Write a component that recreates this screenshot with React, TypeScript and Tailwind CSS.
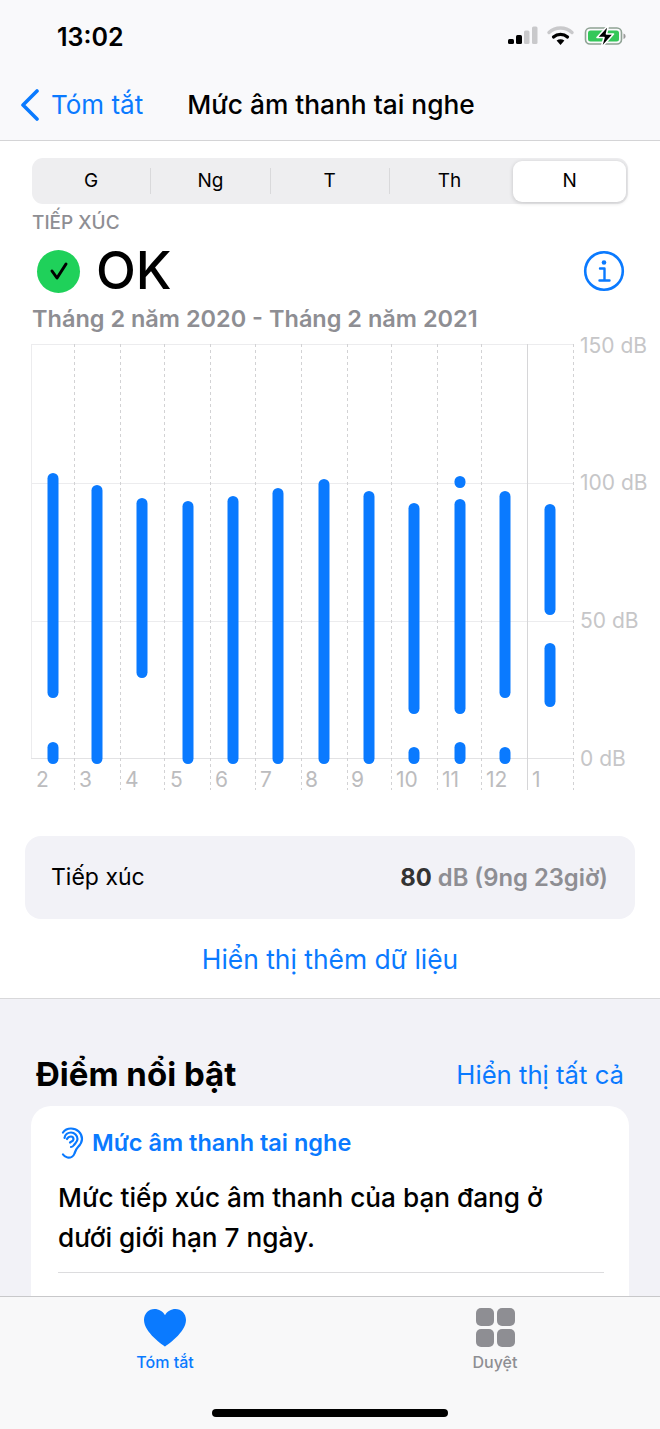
import React from 'react';

const font = { fontFamily: 'Inter, "Noto Sans", sans-serif' };

// chart data, y values are relative to the top of the chart box
const bars: [number, number, number][] = [
  [53, 133, 358], [53, 402, 424],
  [97, 145, 424],
  [142, 158, 338],
  [188, 161, 424],
  [233, 156, 424],
  [278, 148, 424],
  [324, 139, 424],
  [369, 151, 424],
  [414, 163, 374], [414, 407, 424],
  [460, 136, 148], [460, 159, 374], [460, 402, 424],
  [505, 151, 358], [505, 407, 424],
  [550, 164, 275], [550, 303, 367],
];

const gridRows = [4, 143, 281, 418];
const dashed = [74, 120, 164, 210, 255, 301, 347, 391, 437, 481, 573];

const monthLabels: [string, string][] = [
  ['2', 'left-[36px]'], ['3', 'left-[79px]'], ['4', 'left-[125px]'], ['5', 'left-[170px]'],
  ['6', 'left-[215px]'], ['7', 'left-[260px]'], ['8', 'left-[305px]'], ['9', 'left-[351px]'],
  ['10', 'left-[396px]'], ['11', 'left-[442px]'], ['12', 'left-[486px]'], ['1', 'left-[532px]'],
];

const dbLabels: [string, string][] = [
  ['150 dB', 'top-[-6px]'], ['100 dB', 'top-[131px]'], ['50 dB', 'top-[269px]'], ['0 dB', 'top-[407px]'],
];

const StatusIcons = () => (
  <svg width="120" height="22" viewBox="0 0 120 22" fill="none" className="overflow-visible">
    <rect x="0" y="13" width="6" height="5" rx="1.5" fill="#000" />
    <rect x="8" y="9" width="6" height="9" rx="1.5" fill="#000" />
    <rect x="16" y="4.5" width="5.5" height="13.5" rx="1.5" fill="#c9c9cb" />
    <rect x="24" y="0.5" width="5.5" height="17.5" rx="1.5" fill="#c9c9cb" />
    <path d="M41 6.5C47.5 0.5 57.5 0.5 64 6.5" stroke="#c9c9cb" strokeWidth="3.4" strokeLinecap="round" />
    <path d="M45.5 11C49.5 7.4 55.5 7.4 59.5 11" stroke="#000" strokeWidth="3.2" strokeLinecap="round" />
    <path d="M52.5 19L48.6 14.6C51 12.8 54 12.8 56.4 14.6Z" fill="#000" />
    <rect x="77.5" y="2" width="36" height="16" rx="4.5" stroke="#8fa294" strokeWidth="1.6" />
    <rect x="80" y="4.5" width="31" height="11" rx="2.5" fill="#34c759" />
    <path d="M115.5 7.5V13C117 12.5 117.5 11.5 117.5 10.2C117.5 9 117 8 115.5 7.5Z" fill="#9b9b9b" />
    <path d="M100.5 -1L89 11.5H96L93 22L105.5 8H98.5Z" fill="#000" stroke="#fff" strokeWidth="1.6" strokeLinejoin="round" />
  </svg>
);

const Chart = () => (
  <div className="relative h-[456px] w-full">
    <svg width="660" height="456" viewBox="0 0 660 456" fill="none" className="absolute left-0 top-0">
      {gridRows.map((y) => (
        <line key={y} x1="31" x2="573" y1={y + 0.5} y2={y + 0.5} stroke={y === 418 ? '#e2e2e4' : '#ececee'} />
      ))}
      <line x1="31.5" x2="31.5" y1="4" y2="418" stroke="#ececee" />
      <line x1="527.5" x2="527.5" y1="4" y2="450" stroke="#d6d6d8" />
      {dashed.map((x) => (
        <line key={x} x1={x + 0.5} x2={x + 0.5} y1="4" y2="450" stroke="#d2d2d4" strokeDasharray="3 3" />
      ))}
      {bars.map(([x, y1, y2], i) => (
        <rect key={i} x={x - 5.5} y={y1} width="11" height={y2 - y1} rx="5.5" fill="#0a7aff" />
      ))}
    </svg>
    {dbLabels.map(([text, pos]) => (
      <span key={text} className={`absolute left-[580px] ${pos} text-[21px] leading-[23px] text-[#c6c6c8] whitespace-nowrap`}>{text}</span>
    ))}
    {monthLabels.map(([text, pos]) => (
      <span key={text + pos} className={`absolute ${pos} top-[428px] text-[21px] leading-[23px] text-[#bcbcbe]`}>{text}</span>
    ))}
  </div>
);

const Segmented = () => (
  <div className="mx-[32px] mt-[17px] h-[46px] rounded-[11px] bg-[#eeeef0] flex items-center text-[19px] text-black">
    {['G', 'Ng', 'T', 'Th'].map((label, i) => (
      <div key={label} className={`w-[119.3px] h-[26px] flex items-center justify-center ${i < 3 ? 'border-r border-[#d9d9db]' : ''}`}>{label}</div>
    ))}
    <div className="flex-1 ml-[4px] mr-[2px] h-[41px] rounded-[9px] bg-white shadow-[0_1px_4px_rgba(0,0,0,0.18)] flex items-center justify-center">N</div>
  </div>
);

export default function App() {
  return (
    <div className="w-[660px] h-[1429px] bg-white overflow-hidden flex flex-col" style={font}>
      {/* header */}
      <div className="h-[141px] shrink-0 bg-[#f9f9fb] border-b border-[#d4d4d6] flex flex-col">
        <div className="flex justify-between items-center pl-[57px] pr-[32px] pt-[13px] h-[66px] pb-[6px]">
          <span className="text-[25px] font-semibold text-black leading-[30px]">13:02</span>
          <StatusIcons />
        </div>
        <div className="flex items-center pl-[20px] mt-[23px]">
          <svg width="20" height="32" viewBox="0 0 20 32" fill="none">
            <path d="M17 2L3 16L17 30" stroke="#0a7aff" strokeWidth="3.6" strokeLinecap="round" strokeLinejoin="round" />
          </svg>
          <span className="ml-[11px] text-[26px] text-[#0a7aff] leading-[32px]">Tóm tắt</span>
          <span className="ml-[44px] text-[26.3px] font-medium text-black leading-[32px]">Mức âm thanh tai nghe</span>
        </div>
      </div>

      <div className="flex-1 min-h-0 overflow-hidden flex flex-col">
        <div className="bg-white border-b border-[#d8d8da] shrink-0">
          <Segmented />
          <div className="pl-[32px] mt-[7px] text-[19px] font-medium leading-[24px] text-[#8e8e93]">TIẾP XÚC</div>
          <div className="flex items-center justify-between pl-[37px] pr-[35px] mt-[13px] h-[46px]">
            <div className="flex items-center gap-[16px]">
              <div className="w-[43px] h-[43px] rounded-full bg-[#1fd15a] flex items-center justify-center">
                <svg width="22" height="20" viewBox="0 0 22 20" fill="none">
                  <path d="M4 10L9 17L18 3" stroke="#000" strokeWidth="3" strokeLinecap="round" strokeLinejoin="round" />
                </svg>
              </div>
              <span className="text-[52px] font-medium text-black leading-[46px]">OK</span>
            </div>
            <svg width="42" height="42" viewBox="0 0 42 42" fill="none">
              <circle cx="21" cy="21" r="18.8" stroke="#0a7aff" strokeWidth="2.6" />
              <circle cx="21" cy="12.5" r="2.3" fill="#0a7aff" />
              <path d="M17 18.5H21.5V30M16.5 30.5H26.5" stroke="#0a7aff" strokeWidth="2.4" strokeLinecap="round" strokeLinejoin="round" />
            </svg>
          </div>
          <div className="pl-[32px] mt-[10px] text-[23.5px] font-semibold leading-[30px] text-[#8e8e93]">Tháng 2 năm 2020 - Tháng 2 năm 2021</div>
          <div className="mt-[6px]">
            <Chart />
          </div>
          <div className="mx-[25px] mt-[40px] h-[83px] rounded-[16px] bg-[#f2f2f7] flex items-center justify-between pl-[26px] pr-[27px] text-[23px]">
            <span className="text-black">Tiếp xúc</span>
            <span className="text-[23.8px] font-semibold text-[#8e8e93]"><span className="font-bold text-[#333]">80</span> dB (9ng 23giờ)</span>
          </div>
          <div className="h-[79px] pt-[3px] flex items-center justify-center text-[26.4px] text-[#0a7aff]">Hiển thị thêm dữ liệu</div>
        </div>

        <div className="flex-1 min-h-0 bg-[#f2f2f7] overflow-hidden">
          <div className="flex items-center justify-between pl-[36px] pr-[36px] mt-[54px] h-[44px]">
            <span className="text-[33px] font-bold text-black">Điểm nổi bật</span>
            <span className="text-[25.7px] text-[#0a7aff]">Hiển thị tất cả</span>
          </div>
          <div className="mx-[31px] mt-[9px] h-[230px] rounded-t-[20px] bg-white pl-[27px] pr-[25px] pt-[20px]">
            <div className="flex items-center gap-[8px] h-[34px]">
              <svg width="26" height="32" viewBox="0 0 26 32" fill="none" stroke="#0a7aff" strokeWidth="2.2" strokeLinecap="round">
                <path d="M5 5.5C7 2.5 10 1.5 13 1.5C19 1.5 24 6 24 12C24 16 22 18 20 20C18 22 17.5 24 16.5 26.5C15.5 29.5 12.5 31 9.5 30.5C7.5 30 6 29 5 27.5" />
                <path d="M6.5 11C7 7.5 10 5.5 13 5.5C16.5 5.5 19.5 8.5 19.5 12C19.5 14.5 18 15.5 16 18C15 19.5 14.5 20 13 20" />
                <path d="M9 12C10 10 11.5 9.5 13 9.5C14.5 9.5 15.5 10.8 15.5 12.2C15.5 14 13.5 14.5 12 15.5" />
              </svg>
              <span className="text-[23.5px] font-semibold text-[#0a7aff] leading-[28px]">Mức âm thanh tai nghe</span>
            </div>
            <p className="mt-[18px] text-[26.2px] font-medium leading-[40px] text-black">Mức tiếp xúc âm thanh của bạn đang ở<br />dưới giới hạn 7 ngày.</p>
            <div className="mt-[14px] border-t border-[#dcdcde]" />
          </div>
        </div>
      </div>

      {/* tab bar */}
      <div className="h-[133px] shrink-0 bg-[#f8f8f9] border-t border-[#c8c8ca] flex flex-col">
        <div className="flex h-[112px]">
          <div className="w-[330px] flex flex-col items-center pt-[11px]">
            <svg width="44" height="39" viewBox="0 0 44 39" className="block">
              <path d="M22 38.5C20.5 37.5 1 24.5 1 12C1 5.5 5.8 1 11.5 1C16 1 19.8 3.3 22 7.2C24.2 3.3 28 1 32.5 1C38.2 1 43 5.5 43 12C43 24.5 23.5 37.5 22 38.5Z" fill="#0a7aff" />
            </svg>
            <span className="mt-[5px] text-[16px] font-medium leading-[20px] text-[#0a7aff]">Tóm tắt</span>
          </div>
          <div className="w-[330px] flex flex-col items-center pt-[11px]">
            <div className="grid grid-cols-2 gap-[3px] h-[39px]">
              <div className="w-[18px] h-[18px] rounded-[5px] bg-[#8e8e93]" />
              <div className="w-[18px] h-[18px] rounded-[5px] bg-[#8e8e93]" />
              <div className="w-[18px] h-[18px] rounded-[5px] bg-[#8e8e93]" />
              <div className="w-[18px] h-[18px] rounded-[5px] bg-[#8e8e93]" />
            </div>
            <span className="mt-[5px] text-[16px] font-medium leading-[20px] text-[#8e8e93]">Duyệt</span>
          </div>
        </div>
        <div className="mx-auto w-[236px] h-[8px] rounded-full bg-black" />
      </div>
    </div>
  );
}
